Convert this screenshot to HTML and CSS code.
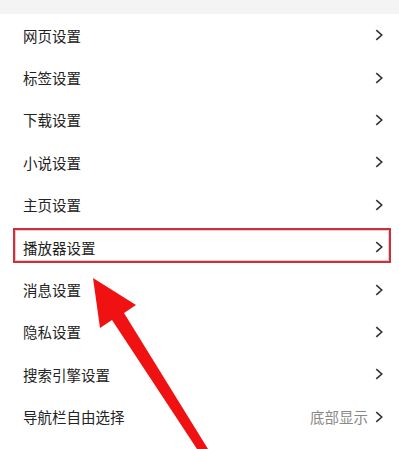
FILE: index.html
```html
<!DOCTYPE html>
<html lang="zh-CN">
<head>
  <meta charset="UTF-8" />
  <meta name="viewport" content="width=device-width, initial-scale=1.0" />
  <title>设置</title>
  <link rel="stylesheet" href="styles.css">
</head>
<body>
  <div class="top-band"></div>
  <ul class="settings">
    <li class="row"><span>网页设置</span><svg class="chev" viewBox="0 0 7 11"><path d="M1 1 L6 5.5 L1 10" /></svg></li>
    <li class="row"><span>标签设置</span><svg class="chev" viewBox="0 0 7 11"><path d="M1 1 L6 5.5 L1 10" /></svg></li>
    <li class="row"><span>下载设置</span><svg class="chev" viewBox="0 0 7 11"><path d="M1 1 L6 5.5 L1 10" /></svg></li>
    <li class="row"><span>小说设置</span><svg class="chev" viewBox="0 0 7 11"><path d="M1 1 L6 5.5 L1 10" /></svg></li>
    <li class="row"><span>主页设置</span><svg class="chev" viewBox="0 0 7 11"><path d="M1 1 L6 5.5 L1 10" /></svg></li>
    <li class="row highlight"><span>播放器设置</span><svg class="chev" viewBox="0 0 7 11"><path d="M1 1 L6 5.5 L1 10" /></svg></li>
    <li class="row"><span>消息设置</span><svg class="chev" viewBox="0 0 7 11"><path d="M1 1 L6 5.5 L1 10" /></svg></li>
    <li class="row"><span>隐私设置</span><svg class="chev" viewBox="0 0 7 11"><path d="M1 1 L6 5.5 L1 10" /></svg></li>
    <li class="row"><span>搜索引擎设置</span><svg class="chev" viewBox="0 0 7 11"><path d="M1 1 L6 5.5 L1 10" /></svg></li>
    <li class="row"><span>导航栏自由选择</span><span class="value">底部显示</span><svg class="chev" viewBox="0 0 7 11"><path d="M1 1 L6 5.5 L1 10" /></svg></li>
  </ul>

  <svg class="arrow" viewBox="0 0 399 449">
    <polygon points="93,278 136,305 124,313 208,449 212,460 200,460 197,449 112,320 100,328" />
  </svg>
</body>
</html>
```

FILE: styles.css
```css
body {
  margin: 0;
  background: #fff;
  font-family: "Noto Sans CJK SC", "Noto Sans", sans-serif;
  position: relative;
  overflow: hidden;
  height: 449px;
}

.top-band {
  height: 14px;
  background: #f4f4f4;
}

.settings {
  list-style: none;
  margin: 0;
  padding: 0;
}

.row {
  position: relative;
  display: flex;
  align-items: center;
  height: 42.4px;
  padding: 0 16px 0 23px;
  font-size: 14.5px;
  color: #222;
}

.row span:first-child {
  flex: 1;
}

.value {
  color: #888;
  margin-right: 7px;
}

.chev {
  width: 8px;
  height: 12px;
  fill: none;
  stroke: #333;
  stroke-width: 1.5;
}

.highlight::after {
  content: "";
  position: absolute;
  left: 13px;
  right: 8px;
  top: 2px;
  height: 31px;
  border: 2px solid #c8323c;
  box-shadow: inset 0 0 0 1px #f3c4c8;
}

.arrow {
  position: absolute;
  left: 0;
  top: 0;
  width: 399px;
  height: 449px;
  pointer-events: none;
}

.arrow polygon {
  fill: #f01212;
}
```
